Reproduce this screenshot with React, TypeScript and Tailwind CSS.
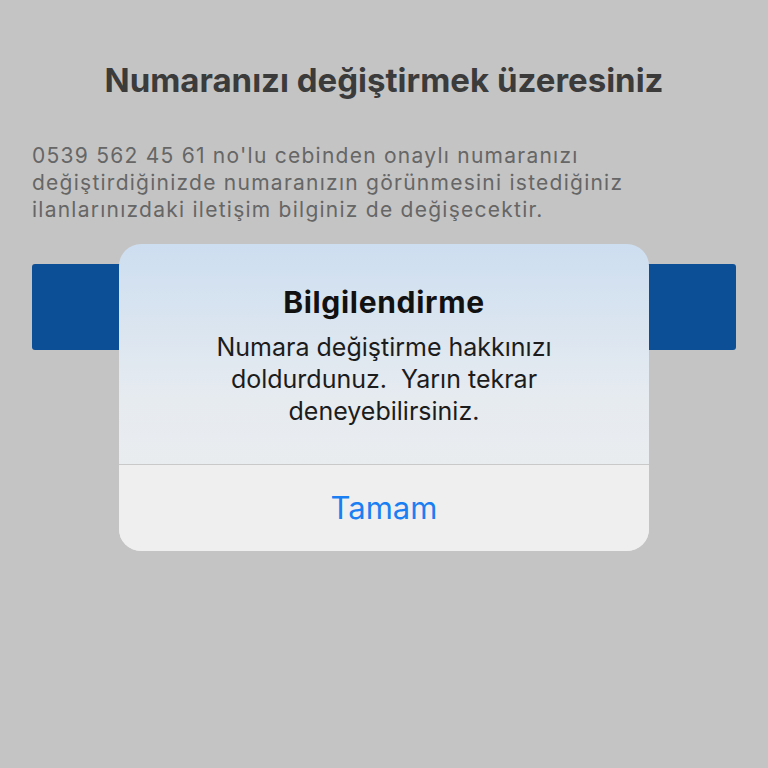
export default function App() {
  return (
    <div className="relative w-[768px] h-[768px] overflow-hidden bg-[#c4c4c4] font-['Inter',sans-serif]">
      {/* Page behind the dim overlay */}
      <div className="flex flex-col px-8 pt-[60px]">
        <h1 className="text-center text-[33px] leading-[40px] font-bold text-[#3b3b3b]">
          Numaranızı değiştirmek üzeresiniz
        </h1>
        <p className="mt-[42px] text-[21px] leading-[27px] tracking-[1.25px] text-[#666666]">
          0539 562 45 61 no'lu cebinden onaylı numaranızı
          <br />
          değiştirdiğinizde numaranızın görünmesini istediğiniz
          <br />
          ilanlarınızdaki iletişim bilginiz de değişecektir.
        </p>
        <div className="mt-[41px] h-[86px] rounded-[3px] bg-[#0d4f97]" />
      </div>

      {/* Alert */}
      <div className="absolute left-[119px] top-[244px] w-[530px] rounded-[22px] overflow-hidden bg-gradient-to-b from-[#cddef0] via-[#e6ebf0] to-[#eeeeee]">
        <div className="flex flex-col items-center px-6 pt-[40px] pb-[37px] text-center">
          <div className="text-[30px] leading-[36px] font-bold tracking-[0.7px] text-[#111]">Bilgilendirme</div>
          <div className="mt-[11px] text-[25px] leading-[32px] text-[#1c1c1c]">
            Numara değiştirme hakkınızı
            <br />
            doldurdunuz.&nbsp; Yarın tekrar
            <br />
            deneyebilirsiniz.
          </div>
        </div>
        <div className="h-px bg-[#c9c9c9]" />
        <div className="h-[86px] flex items-center justify-center bg-[#efefef] text-[31px] text-[#1a7ff2]">
          Tamam
        </div>
      </div>
    </div>
  );
}
